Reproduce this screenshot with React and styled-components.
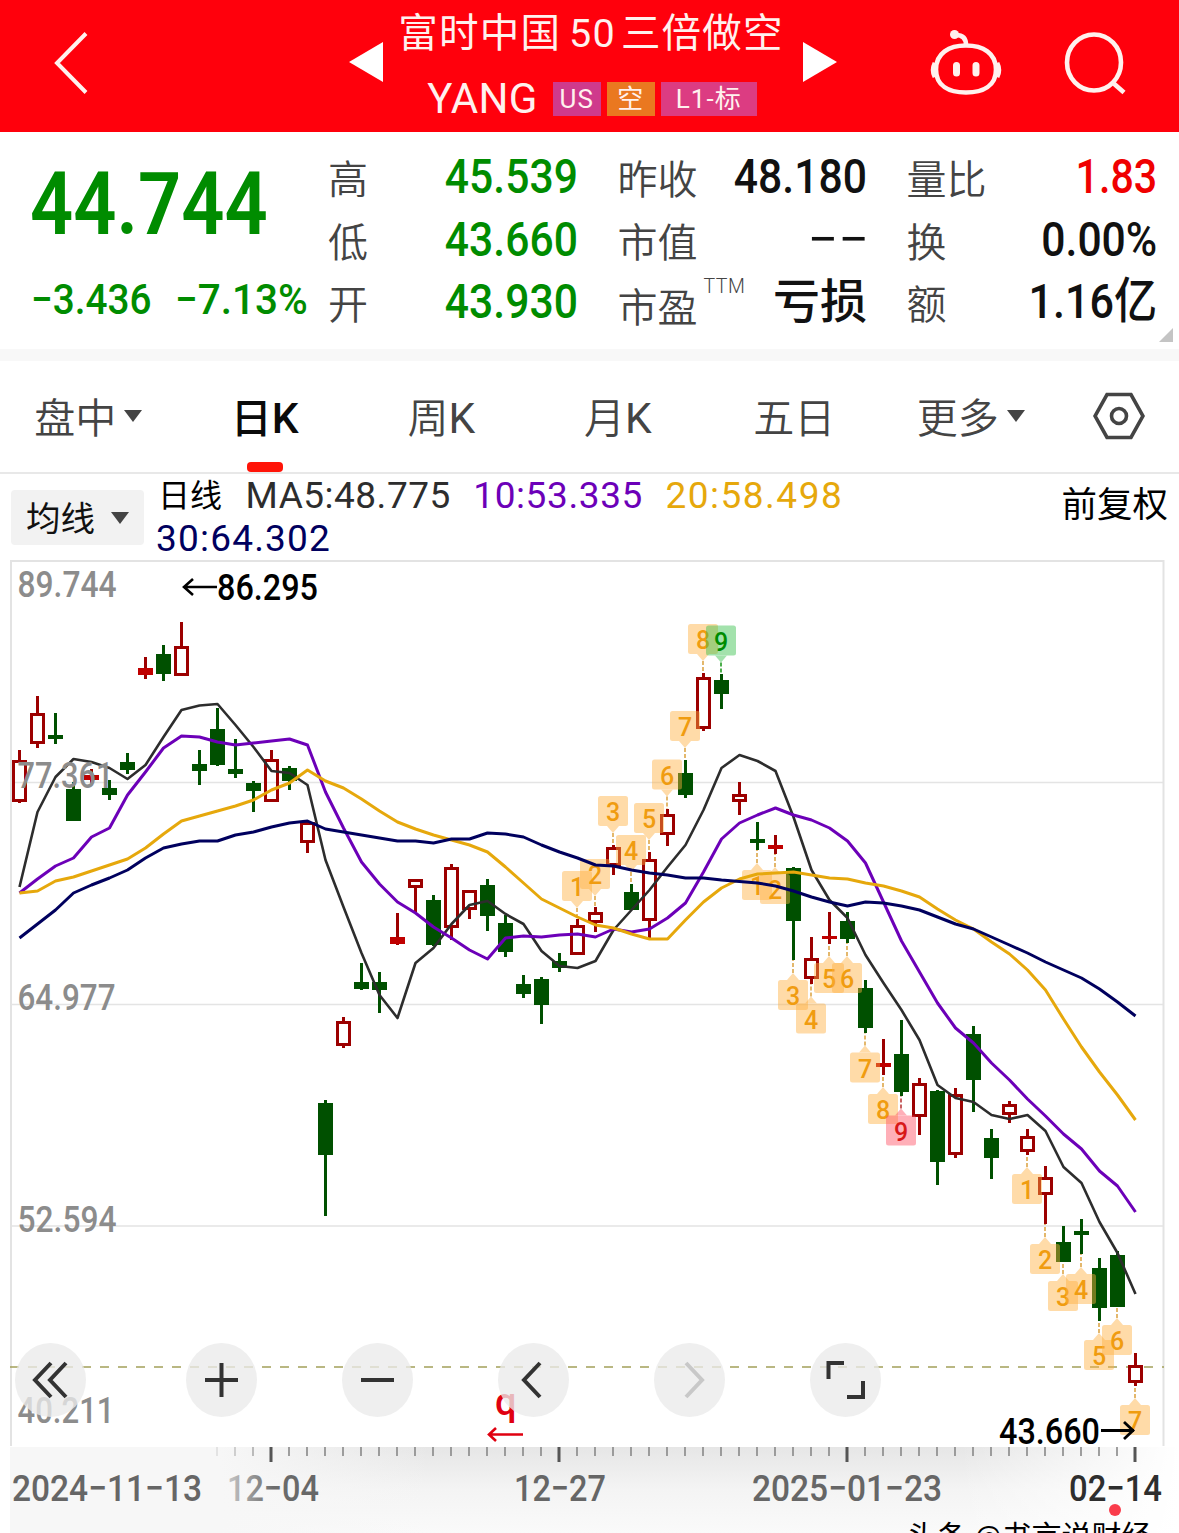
import styled, {createGlobalStyle} from "styled-components";
import {useState} from "react";

const GlobalStyle = createGlobalStyle`
    * {
        box-sizing: border-box;
    }
    body {
        margin: 0;
        background: white;
        font-family: Roboto, "Noto Sans CJK SC", sans-serif;
    }
    button {
        font-family: inherit;
        border: none;
        background: none;
        padding: 0;
    }
`

const Page = styled.div`
    width: 1179px;
    height: 1533px;
    overflow: hidden;
    background: white;
`

/* header */

const Header = styled.header`
    display: flex;
    align-items: center;
    height: 132px;
    padding: 0 50px 7px 53px;
    background: #ff000c;
    color: #fff1ee;
`

const HeaderIcon = styled.svg`
    display: block;
    flex: none;
    margin-left: ${props => props.$gap || 0}px;
    fill: none;
    stroke: #fff1ee;
    stroke-width: 4.6;
`

const Titles = styled.div`
    display: flex;
    flex-direction: column;
    align-items: center;
    width: 420px;
    height: 125px;
    line-height: 1;
`

const Name = styled.h1`
    margin: 13px 4px 0 0;
    font-size: 39.5px;
    line-height: 41px;
    font-weight: 400;
    letter-spacing: 1.2px;
    white-space: nowrap;

    span {
        margin: 0 5px 0 8px;
    }
`

const Symbol = styled.div`
    display: flex;
    align-items: center;
    gap: 6px;
    margin: 24px 2px 0 0;
    height: 41px;

    span:first-child {
        font-size: 42px;
        letter-spacing: 0.3px;
        margin-right: 9px;
    }
`

const Tag = styled.span`
    width: ${props => props.$wide ? '96px' : '48px'};
    height: 34px;
    line-height: 34px;
    text-align: center;
    font-size: 26px;
    letter-spacing: 1px;
    background: ${props => props.$color};
`

/* quote panel */

const Quote = styled.section`
    display: grid;
    grid-template-columns: 257.5px 250px 249.5px 250.5px;
    column-gap: 39.5px;
    height: 217px;
    padding: 14px 21px 0 31px;
    position: relative;
`

const Corner = styled.i`
    position: absolute;
    right: 6px;
    bottom: 7px;
    border: 7.5px solid transparent;
    border-right-color: #c4c4c4;
    border-bottom-color: #c4c4c4;
`

const Num = styled.span`
    display: inline-block;
    transform: scaleX(${props => props.$sx || 0.87});
    transform-origin: ${props => props.$from || 'right'} center;
    white-space: nowrap;
`

const Price = styled.div`
    color: #008c00;
    font-weight: 600;

    strong {
        display: block;
        height: 117px;
        line-height: 117px;
        margin-left: -1px;
        font-size: 87px;
        font-weight: 600;
    }
    div {
        display: flex;
        font-size: 43px;
        font-weight: 500;
        line-height: 72px;
    }
    div span {
        flex: none;
        width: 144px;
    }
`

const Stats = styled.dl`
    display: grid;
    grid-template-rows: repeat(3, 62.5px);
    margin: 0;

    div {
        display: flex;
        justify-content: space-between;
        align-items: center;
    }
    dt {
        font-size: 40px;
        font-weight: 350;
        color: #444;
        white-space: nowrap;
    }
    dd {
        margin: 0;
        font-size: 49px;
        font-weight: 500;
        line-height: 62px;
        color: ${props => props.$color || '#111'};
    }
    dd.dashes {
        margin-right: -2px;
        font-weight: 400;
    }
    dd.loss {
        font-size: 47px;
    }
`

const Ratio = styled.dt`
    padding-top: 6px;

    sup {
        font-size: 19.5px;
        letter-spacing: 0.5px;
        margin-left: 6px;
        line-height: 0;
        vertical-align: 29px;
    }
`

const Value = styled.dd`
    && {
        color: ${props => props.$color};
    }
`

const Divider = styled.div`
    height: 12px;
    background: #f8f8f8;
`

/* period tabs */

const Tabs = styled.nav`
    display: grid;
    grid-template-columns: repeat(6, 1fr) 120px;
    height: 113px;
    border-bottom: 2px solid #e8e8e8;
`

const Tab = styled.button`
    position: relative;
    display: flex;
    align-items: center;
    justify-content: center;
    gap: 8px;
    padding-bottom: 2px;
    font-size: 41px;
    font-weight: ${props => props.$active ? 500 : 350};
    color: ${props => props.$active ? '#0a0a0a' : '#444'};

    span {
        margin-top: -2px;
    }
    em {
        font-style: normal;
        font-size: 42.5px;
        font-weight: ${props => props.$active ? 500 : 400};
    }

    &::after {
        content: "";
        display: ${props => props.$active ? 'block' : 'none'};
        position: absolute;
        bottom: 0;
        width: 36px;
        height: 10px;
        border-radius: 4px;
        background: #ff1408;
    }
`

const Caret = styled.i`
    border: 9px solid transparent;
    border-top: 12px solid #444;
    border-bottom: none;
`

/* moving average legend */

const Legend = styled.div`
    display: flex;
    height: 86px;
    padding: 0 11px;
`

const AverageButton = styled.button`
    display: flex;
    align-items: center;
    justify-content: center;
    gap: 16px;
    width: 133px;
    height: 55px;
    margin: 16px 12px 0 0;
    border-radius: 4px;
    background: #f2f2f2;
    font-size: 34.5px;
    color: #111;

    span {
        margin-top: -4px;
    }
`

const Averages = styled.div`
    flex: 1;
    display: flex;
    flex-wrap: wrap;
    align-content: flex-start;
    column-gap: 22.5px;
    padding-right: 150px;
    font-size: 37px;
    line-height: 43px;

    b {
        font-size: 32px;
        line-height: 45px;
        height: 43px;
        font-weight: 400;
        color: black;
        padding: 0 1px 0 2px;
    }
`

const Average = styled.span`
    color: ${props => props.$color};
    letter-spacing: ${props => props.$spacing}px;
`

const Adjust = styled.span`
    padding-top: 5px;
    font-size: 35.5px;
    line-height: 52px;
    color: black;
    white-space: nowrap;
`

/* chart */

const ChartBox = styled.div`
    position: relative;
    height: 973px;
    overflow: hidden;

    svg {
        display: block;
    }
    svg text {
        font-family: Roboto, "Noto Sans CJK SC", sans-serif;
        font-weight: 500;
    }
`

const Controls = styled.div`
    position: absolute;
    top: 783px;
    left: 15px;
    display: flex;
    gap: 85px;

    button:first-child {
        margin-right: 15px;
    }
`

const RoundButton = styled.button`
    width: 71px;
    height: 74px;
    border-radius: 50%;
    background: rgba(234, 234, 234, 0.78);

    path {
        fill: none;
        stroke: ${props => props.$off ? '#c8c8c8' : '#333'};
        stroke-width: 4;
    }
`

const Watermark = styled.span`
    position: absolute;
    top: 957px;
    left: 907px;
    font-size: 30px;
    line-height: 40px;
    white-space: nowrap;
    color: black;
`

// [up, wick top, body top, body bottom, wick bottom] in page pixels
const candles = [
    [1, 750, 760, 802, 803], [1, 696, 713, 744, 748], [0, 713, 735, 739, 744], [0, 782, 789, 821, 821],
    [1, 769, 775, 780, 784], [0, 780, 788, 795, 800], [0, 753, 762, 770, 774], [1, 657, 668, 675, 679],
    [0, 645, 654, 674, 681], [1, 622, 646, 676, 676], [0, 750, 764, 771, 785], [0, 708, 729, 765, 766],
    [0, 739, 769, 774, 778], [0, 781, 783, 791, 812], [1, 750, 759, 802, 802], [0, 766, 768, 781, 790],
    [1, 822, 822, 843, 853], [0, 1100, 1103, 1155, 1216], [1, 1017, 1021, 1046, 1048], [0, 963, 982, 989, 990],
    [0, 972, 982, 990, 1013], [1, 913, 937, 944, 945], [1, 879, 879, 888, 912], [0, 895, 900, 945, 946],
    [1, 864, 867, 928, 940], [1, 890, 890, 910, 919], [0, 879, 885, 916, 931], [0, 915, 923, 952, 957],
    [0, 975, 984, 994, 998], [0, 977, 979, 1005, 1024], [0, 953, 961, 968, 972], [1, 919, 925, 955, 955],
    [1, 907, 912, 923, 932], [1, 845, 847, 866, 875], [0, 884, 892, 910, 910], [1, 852, 859, 921, 938],
    [1, 809, 814, 835, 846], [0, 760, 773, 795, 798], [1, 673, 677, 729, 731], [0, 674, 680, 694, 709],
    [1, 782, 794, 802, 815], [0, 822, 839, 843, 850], [1, 835, 845, 849, 854], [0, 867, 868, 921, 960],
    [1, 937, 958, 979, 984], [1, 912, 936, 939, 944], [0, 912, 921, 939, 943], [0, 980, 988, 1028, 1033],
    [1, 1039, 1063, 1067, 1075], [0, 1020, 1054, 1092, 1096], [1, 1078, 1083, 1117, 1135], [0, 1090, 1091, 1162, 1185],
    [1, 1088, 1094, 1155, 1158], [0, 1026, 1034, 1080, 1112], [0, 1129, 1138, 1158, 1179], [1, 1101, 1104, 1115, 1123],
    [1, 1129, 1136, 1152, 1155], [1, 1166, 1177, 1195, 1224], [0, 1226, 1242, 1262, 1262], [0, 1219, 1231, 1235, 1254],
    [0, 1258, 1268, 1308, 1321], [0, 1251, 1255, 1307, 1307], [1, 1353, 1365, 1383, 1386],
]

const averages = [
    {
        label: 'MA5:48.775', color: '#2d2d2d', width: 2.6, spacing: 0.5,
        points: [887, 812, 777, 759, 762, 768, 779, 765, 737, 710, 705.5, 704, 725, 747, 771, 773, 785, 860, 907, 953, 995, 1018, 963, 948, 924, 905, 901, 914, 924, 951, 966, 968, 961, 930, 910, 890, 867, 845, 810, 768, 755, 761, 771, 817, 870, 900, 918, 955, 983, 1010, 1040, 1085, 1098, 1102, 1115, 1119, 1115, 1131, 1167, 1183, 1222, 1253, 1294]
    },
    {
        label: '10:53.335', color: '#6c00b8', width: 3, spacing: 0.6,
        points: [893, 879, 866, 858, 837, 828, 795, 772, 748, 736, 737, 742, 745, 743, 741, 739, 745, 792, 828, 862, 884, 902, 913, 927, 938, 950, 959, 938, 936, 937, 935, 934, 937, 929, 932, 929, 918, 903, 872, 839, 823, 815, 808, 815, 820, 828, 841, 863, 902, 941, 972, 1003, 1028, 1043, 1063, 1080, 1099, 1116, 1134, 1149, 1171, 1186, 1212]
    },
    {
        label: '20:58.498', color: '#e6a80c', width: 3, spacing: 1.5,
        points: [893, 891, 881, 877, 871, 865, 859, 848, 834, 821, 816, 811, 806, 800, 790, 783, 770, 781, 788, 799, 811, 822, 829, 835, 840, 845, 852, 867, 883, 899, 908, 917, 925, 928, 934, 939, 939, 920, 902, 888, 879, 874, 873, 872, 875, 878, 879, 883, 886, 891, 897, 909, 920, 929, 942, 954, 970, 990, 1019, 1047, 1072, 1095, 1120]
    },
    {
        label: '30:64.302', color: '#00005e', width: 3, spacing: 1.2,
        points: [938, 924, 910, 893, 885, 878, 870, 858, 848, 844, 841, 841, 835, 832, 827, 823, 821, 829, 832, 835, 838, 841, 841, 843, 839, 839, 833, 834, 837, 845, 852, 858, 865, 866, 870, 873, 875, 878, 878, 880, 881.5, 883, 886, 891, 897, 902, 906, 902, 903, 906, 910, 917, 924, 929, 937, 945, 953, 962, 970, 978, 989, 1002, 1016]
    },
]

// setup counts: [candle index, number, top of the badge]
const countsAbove = [
    [31, 1, 871], [32, 2, 859], [33, 3, 796], [34, 4, 835], [35, 5, 803],
    [36, 6, 759.5], [37, 7, 711], [38, 8, 624], [39, 9, 625.5],
]
const countsBelow = [
    [41, 1, 870], [42, 2, 874], [43, 3, 980], [44, 4, 1003.5], [45, 5, 963], [46, 6, 963],
    [47, 7, 1052.5], [48, 8, 1094], [49, 9, 1115.5], [56, 1, 1174], [57, 2, 1244], [58, 3, 1281],
    [59, 4, 1274], [60, 5, 1340], [61, 6, 1325], [62, 7, 1405],
]

const priceLabels = [['89.744', 597, 99], ['77.361', 788, 96], ['64.977', 1010, 98], ['52.594', 1232, 99], ['40.211', 1423, 97]]
const dates = [
    ['2024−11−13', 12, 190, '#666'], ['12−04', 227, 92, 'url(#fade)'], ['12−27', 514, 92, '#666'],
    ['2025−01−23', 752, 190, '#666'], ['02−14', 1069, 93, '#2e2e2e'],
]

const xOf = i => 19.5 + i * 18

function Candle({i, data}) {
    const [up, high, top, bottom, low] = data;
    const x = xOf(i);
    const color = up ? '#9c0000' : '#005000';
    const small = bottom - top < 8;

    return (
        <g>
            <path d={`M${x} ${high}V${top}M${x} ${bottom}V${low}`} stroke={color} strokeWidth="3"/>
            {up && !small
                ? <rect x={x - 6} y={top + 1.5} width="12" height={bottom - top - 3} fill="none" stroke={color} strokeWidth="3"/>
                : <rect x={x - 7.5} y={top} width="15" height={bottom - top} fill={up ? '#c00000' : color}/>}
        </g>
    )
}

function Count({i, n, top, below}) {
    const x = xOf(i) - 0.5;
    const green = n === 9 && !below;
    const red = n === 9 && below;
    const fill = green ? '#35c04a' : red ? '#ff5064' : '#ffb040';
    const color = green ? '#008c00' : red ? '#d81818' : '#f09c10';
    const line = green ? '#008c00' : red ? '#b02020' : '#d89a30';
    const [, high, , , low] = candles[i];
    const tip = below ? top - 7 : top + 37;
    const pointer = below ? `M${x - 6} ${top}l6 -7l6 7z` : `M${x - 6} ${top + 30}l6 7l6 -7z`;

    return (
        <g>
            <path d={`M${x} ${tip}V${below ? low : high}`} stroke={line} strokeWidth="1.4" strokeDasharray="4 2"/>
            <g fill={fill} opacity="0.45">
                <rect x={x - 15} y={top} width="30" height="30" rx="2.5"/>
                <path d={pointer}/>
            </g>
            <text x={x} y={top + 25} fontSize="25" textAnchor="middle" fill={color}>{n}</text>
        </g>
    )
}

function Chart() {
    return (
        <svg width="1179" height="973" viewBox="0 560 1179 973">
            <defs>
                <linearGradient id="axis" x1="0" y1="0" x2="0" y2="1">
                    <stop offset="0" stopColor="#e6e6e6"/>
                    <stop offset="0.5" stopColor="#f4f4f4"/>
                    <stop offset="1" stopColor="#fafafa"/>
                </linearGradient>
                <linearGradient id="left" x1="0" y1="0" x2="1" y2="0">
                    <stop offset="0" stopColor="#f7f7f7"/>
                    <stop offset="0.5" stopColor="#f7f7f7"/>
                    <stop offset="1" stopColor="#f7f7f7" stopOpacity="0"/>
                </linearGradient>
                <linearGradient id="right" x1="0" y1="0" x2="1" y2="0">
                    <stop offset="0" stopColor="#ffffff" stopOpacity="0"/>
                    <stop offset="1" stopColor="#ffffff"/>
                </linearGradient>
                <linearGradient id="fade" x1="0" y1="0" x2="1" y2="0">
                    <stop offset="0" stopColor="#c8c8c8"/>
                    <stop offset="0.5" stopColor="#6c6c6c"/>
                    <stop offset="1" stopColor="#666666"/>
                </linearGradient>
            </defs>

            <rect x="10" y="1447" width="1169" height="86" fill="url(#axis)"/>
            <rect x="10" y="1447" width="420" height="86" fill="url(#left)"/>
            <rect x="960" y="1447" width="219" height="86" fill="url(#right)"/>

            <path d="M11 1446V561H1163.5V1446" fill="none" stroke="#e3e3e3" strokeWidth="2"/>
            <path d="M11 782.5H1163M11 1004.5H1163M11 1226H1163" stroke="#e4e4e4" strokeWidth="1.6"/>
            <path d="M10 1367H1164" stroke="#a3a05a" strokeWidth="1.6" strokeDasharray="9 9"/>

            {candles.map((data, i) => <Candle key={i} i={i} data={data}/>)}
            {countsAbove.map(([i, n, top]) => <Count key={i} i={i} n={n} top={top}/>)}
            {countsBelow.map(([i, n, top]) => <Count key={i} i={i} n={n} top={top} below/>)}
            {averages.map(line => (
                <polyline key={line.label} fill="none" stroke={line.color} strokeWidth={line.width} strokeLinejoin="round"
                    points={line.points.map((y, i) => `${xOf(i)},${y}`).join(' ')}/>
            ))}

            {priceLabels.map(([text, y, length]) => (
                <text key={text} x="17.5" y={y} fontSize="36.5" fill="#8c8c8c" textLength={length} lengthAdjust="spacingAndGlyphs">{text}</text>
            ))}

            <text x="217" y="600" fontSize="37" textLength="101" lengthAdjust="spacingAndGlyphs">86.295</text>
            <path d="M217 587H184M193 579L184 587L193 595" fill="none" stroke="black" strokeWidth="2.6"/>
            <text x="999" y="1443.5" fontSize="37" textLength="101" lengthAdjust="spacingAndGlyphs">43.660</text>
            <path d="M1101 1430.5H1134M1124 1422L1133 1430.5L1124 1439" fill="none" stroke="black" strokeWidth="2.8"/>

            <text x="495" y="1415" fontSize="38" fill="#e00010">q</text>
            <path d="M523 1434.5H490M496 1428L489 1434.5L496 1441" fill="none" stroke="#e00010" strokeWidth="2.6"/>

            {candles.map((_, i) => {
                if (i < 11) return null;
                const major = (i - 14) % 16 === 0;
                return <path key={i} d={`M${xOf(i) - 0.5} 1447V${major ? 1462 : 1456}`} stroke={major ? '#555' : '#888'}
                    strokeWidth={major ? 3 : 1.6} opacity={i < 14 ? (i - 10) * 0.22 : 1}/>
            })}
            {dates.map(([text, x, length, color]) => (
                <text key={text} x={x} y="1501" fontSize="37" fill={color} textLength={length} lengthAdjust="spacingAndGlyphs">{text}</text>
            ))}
            <circle cx="1115" cy="1510" r="6" fill="#fa3c4b"/>
        </svg>
    )
}

// drawn in the 71x74 box of each round button
const controls = [
    'M36 20L20 37L36 54M51 20L35 37L51 54',
    'M19 37H52M35.5 20V54',
    'M19 37H52',
    'M42 20L26 37L42 54',
    'M32 20L48 37L32 54',
    'M18.5 36V20H34M37 54H53V38',
]

const tabs = ['盘中', '日K', '周K', '月K', '五日', '更多']

export default function App() {
    const [tab, setTab] = useState('日K');

    return (
        <Page>
            <GlobalStyle/>
            <Header>
                <HeaderIcon width="36" height="64" viewBox="53 31 36 64">
                    <path d="M86 33.5L57 63L86 92.5" strokeWidth="4"/>
                </HeaderIcon>
                <HeaderIcon $gap={260} width="34" height="42" viewBox="0 0 34 42">
                    <path d="M0 20L34 0V40z" fill="white" stroke="none"/>
                </HeaderIcon>
                <Titles>
                    <Name>富时中国<span>50</span>三倍做空</Name>
                    <Symbol>
                        <span>YANG</span>
                        <Tag $color="#cf3a8c">US</Tag>
                        <Tag $color="#ea7820">空</Tag>
                        <Tag $color="#dc3c82" $wide>L1-标</Tag>
                    </Symbol>
                </Titles>
                <HeaderIcon width="34" height="42" viewBox="0 0 34 42">
                    <path d="M34 20L0 0V40z" fill="white" stroke="none"/>
                </HeaderIcon>
                <HeaderIcon $gap={93} width="72" height="68" viewBox="930 29 72 68">
                    <path d="M966 45.5C983 45.5 996 53 996 69.5C996 86 983 92.5 966 92.5C949 92.5 936 86 936 69.5C936 53 949 45.5 966 45.5z"/>
                    <path d="M935 63Q931.5 70 935 77M997 63Q1000.5 70 997 77" strokeWidth="5"/>
                    <path d="M956.5 65.500V73M976 65.500V73" strokeWidth="7" strokeLinecap="round"/>
                    <path d="M956 35Q966 35 966 45"/>
                    <circle cx="954.5" cy="34.5" r="4.5" fill="#fff1ee" stroke="none"/>
                </HeaderIcon>
                <HeaderIcon $gap={61} width="64" height="64" viewBox="1063 30 64 64">
                    <ellipse cx="1094" cy="61.5" rx="27" ry="28"/>
                    <path d="M1112 81L1124 91.5"/>
                </HeaderIcon>
            </Header>
            <Quote>
                <Price>
                    <strong><Num $from="left" $sx={0.87}>44.744</Num></strong>
                    <div>
                        <Num $from="left" $sx={0.9}>−3.436</Num>
                        <Num $from="left" $sx={0.94}>−7.13%</Num>
                    </div>
                </Price>
                <Stats $color="#008c00">
                    <div><dt>高</dt><dd><Num>45.539</Num></dd></div>
                    <div><dt>低</dt><dd><Num>43.660</Num></dd></div>
                    <div><dt>开</dt><dd><Num>43.930</Num></dd></div>
                </Stats>
                <Stats>
                    <div><dt>昨收</dt><dd><Num>48.180</Num></dd></div>
                    <div><dt>市值</dt><dd className="dashes"><Num $sx={1.1}>−−</Num></dd></div>
                    <div><Ratio>市盈<sup>TTM</sup></Ratio><dd className="loss">亏损</dd></div>
                </Stats>
                <Stats>
                    <div><dt>量比</dt><Value $color="#f00000"><Num $sx={0.84}>1.83</Num></Value></div>
                    <div><dt>换</dt><dd><Num>0.00%</Num></dd></div>
                    <div><dt>额</dt><dd><Num $sx={0.88}>1.16亿</Num></dd></div>
                </Stats>
                <Corner/>
            </Quote>
            <Divider/>
            <Tabs>
                {tabs.map(name => (
                    <Tab key={name} $active={tab === name} onClick={() => setTab(name)}>
                        <span>{name.replace('K', '')}{name.endsWith('K') && <em>K</em>}</span>
                        {(name === '盘中' || name === '更多') && <Caret/>}
                    </Tab>
                ))}
                <Tab>
                    <svg width="52" height="48" viewBox="0 0 52 48" fill="none" stroke="#444" strokeWidth="3.6">
                        <path d="M14 2.5H38L50 24L38 45.5H14L2 24z"/>
                        <circle cx="26" cy="24" r="7.5"/>
                    </svg>
                </Tab>
            </Tabs>
            <Legend>
                <AverageButton><span>均线</span><Caret/></AverageButton>
                <Averages>
                    <b>日线</b>
                    {averages.map(line => (
                        <Average key={line.label} $color={line.color} $spacing={line.spacing}>{line.label}</Average>
                    ))}
                </Averages>
                <Adjust>前复权</Adjust>
            </Legend>
            <ChartBox>
                <Chart/>
                <Controls>
                    {controls.map((d, i) => (
                        <RoundButton key={d} $off={i === 4}>
                            <svg width="71" height="74" viewBox="0 0 71 74"><path d={d}/></svg>
                        </RoundButton>
                    ))}
                </Controls>
                <Watermark>头条 @书言说财经</Watermark>
            </ChartBox>
        </Page>
    )
}
